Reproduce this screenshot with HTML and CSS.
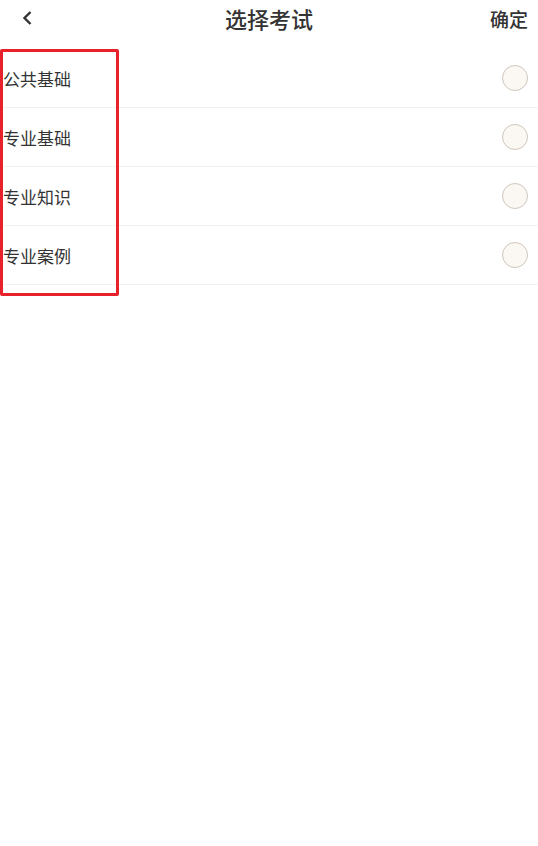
FILE: index.html
```html
<!DOCTYPE html>
<html lang="zh">
<head>
<meta charset="utf-8">
<link rel="stylesheet" href="styles.css">
</head>
<body>
<div class="page">
  <header class="bar">
    <span class="back">
      <svg width="12" height="16" viewBox="0 0 12 16"><path d="M9.5 2 L3.5 8 L9.5 14" fill="none" stroke="#333" stroke-width="2.4" stroke-linejoin="miter"/></svg>
    </span>
    <h1 class="title">选择考试</h1>
    <span class="ok">确定</span>
  </header>
  <ul class="list">
    <li class="row"><span class="label">公共基础</span><span class="radio"></span></li>
    <li class="row"><span class="label">专业基础</span><span class="radio"></span></li>
    <li class="row"><span class="label">专业知识</span><span class="radio"></span></li>
    <li class="row"><span class="label">专业案例</span><span class="radio"></span></li>
  </ul>
  <div class="highlight"></div>
</div>
</body>
</html>
```

FILE: styles.css
```css
html, body {
  margin: 0;
  padding: 0;
  background: #fff;
}
body {
  font-family: "Noto Sans CJK SC", "Noto Sans", sans-serif;
  color: #333;
}
.page {
  position: relative;
  width: 538px;
  height: 846px;
}
.bar {
  height: 36px;
  display: flex;
  align-items: center;
  justify-content: space-between;
  padding: 0 10px 0 21px;
  position: relative;
}
.back {
  display: flex;
  align-items: center;
  width: 14px;
  height: 16px;
}
.title {
  position: absolute;
  left: 0;
  right: 0;
  text-align: center;
  margin: 0;
  font-size: 22px;
  font-weight: 500;
  line-height: 36px;
  pointer-events: none;
  color: #333;
}
.ok {
  font-size: 19px;
  font-weight: 500;
  color: #333;
}
.list {
  list-style: none;
  margin: 13px 0 0;
  padding: 0;
}
.row {
  height: 58px;
  border-bottom: 1px solid #f1f1f1;
  display: flex;
  align-items: center;
  justify-content: space-between;
  padding: 0 10px 0 3px;
}
.label {
  font-size: 17px;
  color: #333;
}
.radio {
  width: 24px;
  height: 24px;
  border-radius: 50%;
  border: 1px solid #cfc6bd;
  background: #fbf7f2;
}
.highlight {
  position: absolute;
  left: 0;
  top: 49px;
  width: 113px;
  height: 241px;
  border: 3px solid #e8222b;
  border-radius: 2px;
}
```
